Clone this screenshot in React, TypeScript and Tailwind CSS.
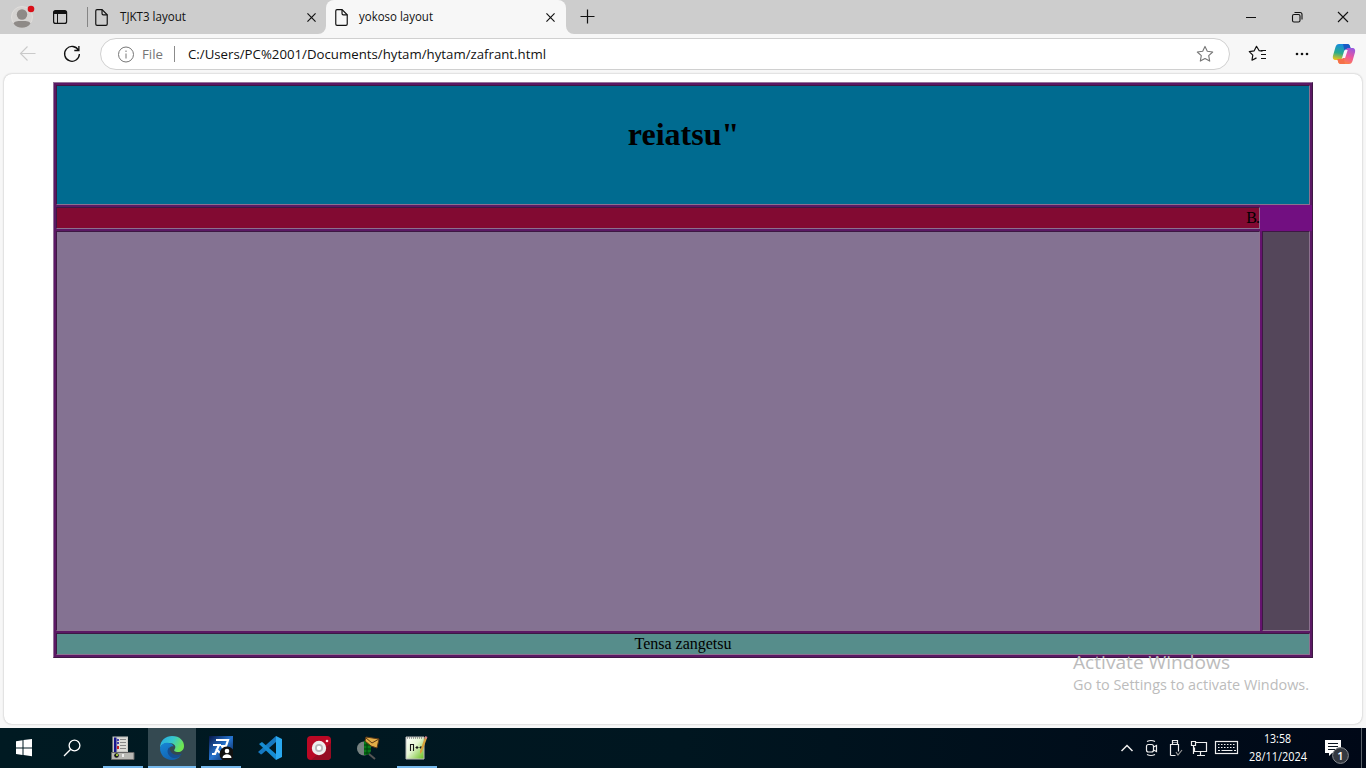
import React from 'react';

const ui = 'font-["Open_Sans","Noto_Sans",sans-serif]';
const serif = 'font-["Liberation_Serif",serif]';
const cell = 'border border-t-[#3d1843] border-l-[#3d1843] border-b-[#8c718f] border-r-[#8c718f]';

function Label({ text, width, size, x = 0, y, color = '#111', h, weight = 400 }: { text: string; width: number; size: number; x?: number; y: number; color?: string; h: number; weight?: number }) {
  return (
    <svg width={width + 2} height={h} className={`shrink-0 overflow-visible ${ui}`}>
      <text x={x} y={y} fontSize={size} fill={color} fontWeight={weight} textLength={width} lengthAdjust="spacingAndGlyphs">{text}</text>
    </svg>
  );
}

function Page() {
  return (
    <svg width="13" height="17" viewBox="0 0 12 16" fill="none" stroke="#111" strokeWidth="1.1" className="shrink-0">
      <path d="M1.8.6h4.7l4.9 4.9v8.7c0 .7-.5 1.2-1.2 1.2H1.8C1.1 15.4.6 14.900.6 14.200V1.800C.6 1.100 1.100.6 1.800.6Z" />
      <path d="M6.500.6v3.700c0 .700.500 1.200 1.200 1.200h3.700" />
    </svg>
  );
}

function Close({ s = 9 }: { s?: number }) {
  return <svg width={s} height={s} viewBox="0 0 10 10" className="shrink-0" stroke="#111" strokeWidth="1.3"><path d="M.5.5l9 9M9.500.5l-9 9" /></svg>;
}

function TabBar() {
  return (
    <div className="flex h-[34px] items-center bg-[#cdcdcd]">
      <svg width="88" height="34" className="shrink-0" fill="none">
        <circle cx="22" cy="17" r="10.500" fill="#d5d3d1" stroke="#e0dedc" />
        <circle cx="22" cy="14.500" r="5.200" fill="#8e8a87" />
        <path d="M13.500 23.500c1-2 3-2.500 8.500-2.500s7.500.5 8.500 2.500c-2 3-5 4.300-8.500 4.300s-6.500-1.300-8.500-4.300Z" fill="#8e8a87" />
        <circle cx="31" cy="9" r="3.300" fill="#d90f18" />
        <rect x="53.600" y="10.600" width="13" height="12.800" rx="2" stroke="#111" strokeWidth="1.200" />
        <path d="M53.500 14V12.500a2 2 0 0 1 2-2h9a2 2 0 0 1 2 2V14Z" fill="#111" /><path d="M57.500 14v9" stroke="#111" />
        <path d="M87.500 7v20" stroke="#858585" />
      </svg>
      <div className="flex h-full w-[238px] items-center pl-[7px] pr-[10px]">
        <Page /><div className="w-3" /><Label text="TJKT3 layout" width={66} size={12} y={14} h={20} />
        <div className="grow" /><Close />
      </div>
      <div className="relative flex h-full w-[240px] items-center rounded-t-lg bg-[#f7f7f7] pl-[9px] pr-[11px]">
        <svg width="8" height="8" className="absolute -left-2 bottom-0"><path d="M8 0v8H0a8 8 0 0 0 8-8Z" fill="#f7f7f7" /></svg>
        <Page /><div className="w-[11px]" /><Label text="yokoso layout" width={74} size={12} y={14} h={20} />
        <div className="grow" /><Close />
        <svg width="8" height="8" className="absolute -right-2 bottom-0"><path d="M0 0v8h8a8 8 0 0 1-8-8Z" fill="#f7f7f7" /></svg>
      </div>
      <svg width="42" height="34" stroke="#111" strokeWidth="1.200"><path d="M14.500 16.500h14M21.500 9.500v14" /></svg>
      <div className="grow" />
      <svg width="130" height="34" fill="none" stroke="#111" strokeWidth="1.100">
        <path d="M10 17.500h10M102 12l10 10M112 12l-10 10" />
        <rect x="56.500" y="14.500" width="7.500" height="7.500" rx="1.500" /><path d="M58.500 12.500h5.500a2 2 0 0 1 2 2v5" />
      </svg>
    </div>
  );
}

function Copilot() {
  return (
    <svg width="24" height="24" viewBox="0 0 24 24">
      <defs>
        <linearGradient id="ca" x1=".4" y1="0" x2=".2" y2="1"><stop stopColor="#168be0" /><stop offset=".55" stopColor="#2aac8c" /><stop offset="1" stopColor="#f4c514" /></linearGradient>
        <linearGradient id="cb" x1=".8" y1="0" x2=".3" y2="1"><stop stopColor="#9858df" /><stop offset=".5" stopColor="#ee579b" /><stop offset="1" stopColor="#ff8b35" /></linearGradient>
      </defs>
      <path d="M7 2h8c2 0 2.500 1 3 3l.6 2H15c-2 0-2.600 1-3.200 3l-1.600 5.500C9.600 17.500 9 18 7 18H4c-3 0-3.700-2-2.800-5l2.300-8C4.200 3 5 2 7 2Z" fill="url(#ca)" />
      <path d="M11 2h4.500c1.600 0 2.200 1 2.700 2.700L19 7h-4c-1.300 0-2 .5-2.500 1.500Z" fill="#1959c4" />
      <path d="M17 22H9c-2 0-2.600-1-3.100-3L5.500 17H9c2 0 2.600-1 3.200-3l1.600-5.500C14.400 6.500 15 6 17 6h3c3 0 3.700 2 2.800 5l-2.300 8c-.7 2-1.500 3-3.500 3Z" fill="url(#cb)" />
      <path d="M13 22H9c-2 0-2.600-1-3.100-3L5.500 17H9c1.300 0 2-.5 2.500-1.500Z" fill="#f5704a" />
      <path d="M13.300 8h2.400l-2.600 8h-2.400Z" fill="#f9f4fa" />
    </svg>
  );
}

function AddressBar() {
  return (
    <div className="flex h-10 items-center bg-[#f7f7f7]">
      <svg width="100" height="40" fill="none" stroke="#111" strokeWidth="1.300" className="shrink-0">
        <path d="M35.500 19.500h-15M27.500 12.500l-7 7 7 7" stroke="#cacaca" strokeWidth="1.100" />
        <path d="M78.600 16.500A7.400 7.400 0 1 0 79.400 20M78.900 12v4.500h-4.600" />
      </svg>
      <div className="flex h-8 w-[1130px] items-center rounded-full border border-[#d0d0d0] bg-white pl-[17px] pr-[15px]">
        <svg width="17" height="17" fill="none" stroke="#767676"><circle cx="8" cy="8.500" r="7.500" /><path d="M8 7.500v5M8 4.500V6" /></svg>
        <div className="w-[7px]" /><Label text="File" width={21} size={13} y={14} h={18} color="#767676" />
        <div className="ml-[9px] mr-[13px] h-4 w-px bg-[#8b8b8b]" />
        <Label text="C:/Users/PC%2001/Documents/hytam/hytam/zafrant.html" width={358} size={13} y={14} h={18} />
        <div className="grow" />
        <svg width="18" height="18" viewBox="0 0 18 18" fill="none" stroke="#767676" strokeWidth="1.100"><path d="M9 1.400l2.300 4.900 5.400.7-4 3.700 1 5.400L9 13.500l-4.700 2.600 1-5.400-4-3.700 5.400-.7Z" strokeLinejoin="round" /></svg>
      </div>
      <svg width="98" height="40" fill="none" stroke="#111" strokeWidth="1.200">
        <path d="M32.500 17.200l-3.300-.5-2.700-4.400-2.300 4.500-4.900.8 3.500 3.500-.8 5.100 4.500-2.300M31 16.500h5M31 20.500h5M31 24.500h5" strokeLinejoin="round" />
        <g fill="#111" stroke="none"><circle cx="67" cy="20" r="1.300" /><circle cx="72" cy="20" r="1.300" /><circle cx="77" cy="20" r="1.300" /></g>
      </svg>
      <div className="ml-1"><Copilot /></div>
    </div>
  );
}

function Layout() {
  return (
    <div className={`flex h-[576px] w-[1260px] flex-col gap-[2px] border border-b-[#3d1843] border-l-[#94739a] border-r-[#3d1843] border-t-[#94739a] bg-[#5b1864] p-[2px] text-base leading-[18px] text-black ${serif}`}>
      <div className={`h-[120px] shrink-0 bg-[#006b90] pl-px pt-[30px] text-center ${cell}`}><h1 className="text-[32px] font-bold leading-[37px]">reiatsu"</h1></div>
      <div className="-mr-[2px] flex h-[22px] shrink-0">
        <div className={`w-[1204px] bg-[#820a32] pt-px text-right tracking-[-1px] ${cell}`}>B.</div>
        <div className="-mb-[2px] -mt-[2px] grow bg-[#720f81]" />
      </div>
      <div className="flex h-[400px] shrink-0">
        <div className={`w-[1204px] bg-[#847292] ${cell}`} />
        <div className="w-[2px] bg-[#65126f]" />
        <div className={`grow bg-[#54465a] ${cell}`} />
      </div>
      <div className={`h-[22px] shrink-0 bg-[#568d8b] text-center leading-[20px] ${cell}`}>Tensa zangetsu</div>
    </div>
  );
}

function EdgeIcon() {
  return (
    <svg width="24" height="24" viewBox="0 0 24 24">
      <defs><linearGradient id="ea" x2="1" y2=".4"><stop stopColor="#22a8e8" /><stop offset=".55" stopColor="#38c7cb" /><stop offset="1" stopColor="#6ee652" /></linearGradient><linearGradient id="eb" x2=".6" y2="1"><stop stopColor="#1687d7" /><stop offset="1" stopColor="#1261ae" /></linearGradient></defs>
      <path d="M0 12C0 4 6 0 12 0c8 0 12 5 12 10 0 4-3 6-6 6-3 0-4.500-1-3.500-2.500C17 10 14 7 9 7c-5 0-8 2-9 5Z" fill="url(#ea)" />
      <path d="M0 12c1-4 5-6 9-5 3 .5 4.500 2 4.500 3.500C9 9 7 16 12 20c3 2 6 1.500 9-.5C18 23 15 24 12 24 5 24 0 19 0 12Z" fill="url(#eb)" />
      <path d="M9.500 11C5 15 9 22 14 22c4 0 6-2 8-4.500-4 2-7 1.500-9.500 0-2-1.500-3-3.500-3-6.500Z" fill="#174f91" />
    </svg>
  );
}

function Task({ children, width, line = true, active = false }: { children: React.ReactNode; width: string; line?: boolean; active?: boolean }) {
  return <div className={`flex h-full flex-col items-center ${width} ${active ? 'bg-[#344951]' : ''}`}><div className="flex h-[38px] items-center pt-[2px]">{children}</div>{line && <div className="h-[2px] w-full bg-[#76b9ed]" />}</div>;
}

function Taskbar() {
  return (
    <div className="flex h-10 bg-linear-to-r/srgb from-[#001a22] via-[#001620] to-[#000817]">
      <svg width="103" height="40" fill="white" className="shrink-0">
        <path d="M16 13.300l6.500-1v7.200H16ZM23.500 12.100l8.500-1.200v8.600h-8.500ZM16 20.500h6.500v6.600l-6.500-1ZM23.500 20.500H32v7.700L23.500 27Z" />
        <g fill="none" stroke="white" strokeWidth="1.300"><circle cx="74.500" cy="17.500" r="5.400" /><path d="M70.700 21.300L64 28" /></g>
      </svg>
      <Task width="w-10"><svg width="24" height="24">
        <path d="M1.500.5h15.500v16H1.500Z" fill="#c9c9c5" /><path d="M3 1.500h2.500v15H3Z" fill="#15158c" /><path d="M7 2h9v13H7Z" fill="#deded9" /><path d="M9 3.500h6M9 6.500h6M9 9.500h6M9 12.500h6" stroke="#888" />
        <path d="M6 3h2v2H6ZM6 6h2v2H6Z" fill="#4242ac" /><path d="M6 10h2v3H6Z" fill="#c32226" /><path d="M.5 16.500h22.500v7H.5Z" fill="#b8b8b4" stroke="#666" /><circle cx="5.500" cy="19.500" r="2.300" fill="#171717" /><path d="M5 18h2v2H5Z" fill="#99be32" /><path d="M11 18h2v3h-2Z" fill="#eee" />
      </svg></Task>
      <div className="w-[5px]" />
      <Task width="w-12" active><EdgeIcon /></Task>
      <div className="w-[5px]" />
      <Task width="w-10"><svg width="24" height="24">
        <defs><linearGradient id="pb" y2="1"><stop stopColor="#061546" /><stop offset=".5" stopColor="#2675d0" /><stop offset="1" stopColor="#061640" /></linearGradient></defs>
        <path d="M0 0h24v24H0Z" fill="url(#pb)" /><path d="M7 4h12l-2 6h-4l2 4" fill="none" stroke="white" strokeWidth="2.200" /><path d="M4 9h8M10 9l-4 9H3M7 13l4 4" fill="none" stroke="white" strokeWidth="2.200" /><circle cx="18" cy="18" r="7.500" fill="#111" /><circle cx="18" cy="15" r="2.300" fill="white" /><path d="M13.500 22c0-5 9-5 9 0Z" fill="white" />
      </svg></Task>
      <div className="w-[9px]" />
      <Task width="w-10" line={false}><svg width="24" height="24"><path d="M18 0v6L4 18l-1 .5L0 16Z" fill="#1678c0" /><path d="M1 8l3-2 14 12v6Z" fill="#168cd2" /><path d="M18 0l6 3v18l-6 3Z" fill="#29a8ef" /></svg></Task>
      <div className="w-[9px]" />
      <Task width="w-10" line={false}><svg width="24" height="24"><rect width="24" height="24" rx="4" fill="#ba0824" /><path d="M4 24L24 7v13a4 4 0 0 1-4 4Z" fill="#960c22" /><circle cx="12" cy="12" r="7.200" fill="#eee" /><circle cx="12" cy="12" r="4" fill="#b9b9bc" /><circle cx="12" cy="12" r="2.200" fill="#fff" /><circle cx="20" cy="5" r="1.300" fill="#ffd9df" /></svg></Task>
      <div className="w-[9px]" />
      <Task width="w-10" line={false}><svg width="24" height="24"><circle cx="8" cy="12.500" r="7" fill="#778281" /><path d="M8 5c5 0 7 3 7 8s-3 6-7 6Z" fill="#087b19" /><path d="M8 9h7M8 13h7M8 17h6M11 5v14" stroke="#013e0d" /><path d="M10 1l13 2-2 9-6-2-6-5Z" fill="#e3ae48" stroke="#5e3a16" /><path d="M10 2l6 5 7-4" fill="none" stroke="#5e3a16" /><path d="M13 18l6 5" stroke="#555" strokeWidth="2" /></svg></Task>
      <div className="w-[9px]" />
      <Task width="w-10"><svg width="24" height="24"><defs><linearGradient id="np" y2="1"><stop stopColor="#fff" /><stop offset=".45" stopColor="#e5f5d3" /><stop offset="1" stopColor="#65bd18" /></linearGradient></defs><path d="M1 1h18v22H1Z" fill="url(#np)" stroke="#bbb" /><path d="M2 2h16" stroke="#555" strokeDasharray="1 1" /><path d="M5.500 8v7M5.500 8.500h3v6.500M10.500 11.500h3M12 10v3M14.500 11.500h3M16 10v3" stroke="#171717" fill="none" strokeWidth="1.100" /><path d="M20 1l2 1-5 14-2 2v-3Z" fill="#d7a13c" /><path d="M20 1l2 1" stroke="#d98088" strokeWidth="2" /></svg></Task>
      <div className="grow" />
      <svg width="128" height="40" viewBox="1119 728 128 40" fill="none" stroke="#eee" strokeWidth="1.200" className="shrink-0">
        <path d="M1121.500 751l5.500-5.500 5.500 5.500" strokeWidth="1.500" /><rect x="1146.500" y="744.500" width="7" height="7.500" rx="2" /><path d="M1153.500 747l3-1.500v6l-3-1.500M1147 741.500c3-1.500 5-1.500 8 0M1147 754.500c3 1.500 5 1.500 8 0" />
        <path d="M1172.500 744.500v-4h5v4M1170.500 755.500v-11h8v7M1170.500 755.500h5" /><path d="M1176 752l2 3 4-5" stroke="#999" /><path d="M1174 742v1M1176 742v1" />
        <path d="M1195.500 742.500h11v9h-12v-4M1200.500 752v3M1197 755.500h8M1191.500 741.500h4v4h-4ZM1193.500 746v8" />
        <rect x="1215.500" y="741.500" width="22" height="12" /><path d="M1218 744.500h18M1218 747.500h18" strokeDasharray="1.500 1.500" /><path d="M1218 750.500h2M1221.500 750.500h11M1234 750.500h2" />
      </svg>
      <div className="flex w-[62px] shrink-0 flex-col items-center pl-px">
        <Label text="13:58" width={27} size={12} y={15} h={18} color="#fff" /><Label text="28/11/2024" width={58} size={12} y={15} h={18} color="#fff" />
      </div>
      <svg width="57" height="40" viewBox="1309 728 57 40" className={`shrink-0 ${ui}`}><path d="M1325 740h16v13h-9l-3 3v-3h-4Z" fill="white" /><path d="M1328 743.500h10M1328 746.500h10M1328 749.500h7" stroke="#0a1420" /><circle cx="1340.500" cy="755.500" r="7.900" fill="#343941" stroke="#888c91" /><text x="1337.300" y="759.500" fontSize="11" fontWeight="600" fill="white">1</text><path d="M1361.500 728v40" stroke="#596169" /></svg>
    </div>
  );
}

export default function App() {
  return (
    <div className="flex h-[768px] w-[1366px] flex-col overflow-hidden bg-[#f7f7f7]">
      <TabBar /><AddressBar />
      <main className="relative mx-1 flex h-[650px] justify-center rounded-lg bg-white pt-2 shadow-[0_0_2px_#aaa]">
        <Layout />
        <div className="absolute left-[1069px] top-[578px] flex flex-col">
          <Label text="Activate Windows" width={157} size={19} y={17} h={23} color="#bcbcbc" />
          <Label text="Go to Settings to activate Windows." width={236} size={14.5} y={15} h={20} color="#bcbcbc" />
        </div>
      </main>
      <div className="h-1 shrink-0" />
      <Taskbar />
    </div>
  );
}
